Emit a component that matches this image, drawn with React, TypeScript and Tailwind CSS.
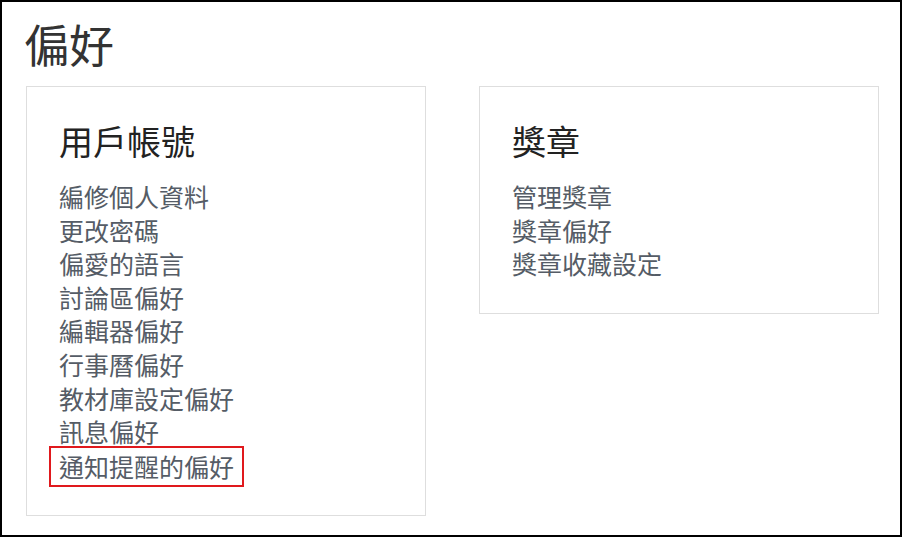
const font = "[font-family:'Noto_Sans_CJK_TC','Noto_Sans',sans-serif]";

const accountLinks = [
  "編修個人資料",
  "更改密碼",
  "偏愛的語言",
  "討論區偏好",
  "編輯器偏好",
  "行事曆偏好",
  "教材庫設定偏好",
  "訊息偏好",
];

const badgeLinks = ["管理獎章", "獎章偏好", "獎章收藏設定"];

function Card({
  title,
  links,
  highlight,
  className,
}: {
  title: string;
  links: string[];
  highlight?: string;
  className: string;
}) {
  return (
    <div className={`border border-[#dedede] bg-white px-[32px] ${className}`}>
      <h3 className="text-[34px] leading-[40px] text-[#222] font-normal mb-[19px]">{title}</h3>
      <ul className="flex flex-col">
        {links.map((l) => (
          <li key={l} className="text-[25px] leading-[33.6px] text-[#555c66]">
            <a href="#">{l}</a>
          </li>
        ))}
        {highlight && (
          <li className="text-[25px] leading-[33.6px] text-[#555c66] -ml-[10px] -mt-[3px]">
            <a href="#" className="inline-block border-2 border-[#e0191d] pl-[8px] pr-[8px] pt-[1px] pb-[1px] leading-[35px]">
              {highlight}
            </a>
          </li>
        )}
      </ul>
    </div>
  );
}

export default function App() {
  return (
    <div className={`w-[902px] h-[537px] border-2 border-black bg-white ${font}`}>
      <div className="pl-[24px] pt-[14px]">
        <h2 className="text-[45px] leading-[56px] text-[#333] font-normal -ml-[2px]">偏好</h2>
        <div className="flex items-start gap-[53px] mt-[14px]">
          <Card
            title="用戶帳號"
            links={accountLinks}
            highlight="通知提醒的偏好"
            className="w-[400px] h-[430px] pt-[34px]"
          />
          <Card title="獎章" links={badgeLinks} className="w-[400px] h-[228px] pt-[34px]" />
        </div>
      </div>
    </div>
  );
}
